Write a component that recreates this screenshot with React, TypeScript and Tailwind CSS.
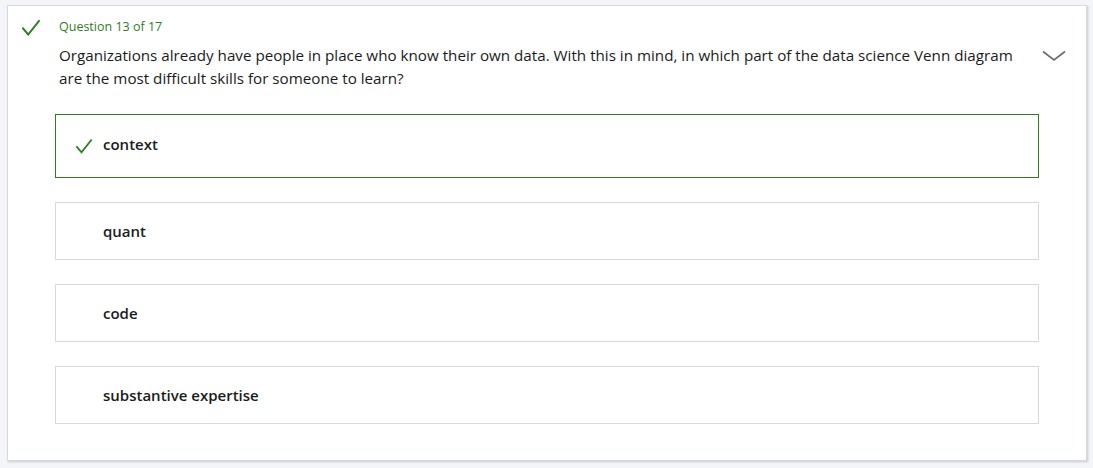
import React from "react";

function Check({ className }: { className?: string }) {
  return (
    <svg className={className} viewBox="0 0 18 16" fill="none">
      <path d="M1 8.5 L6.2 14.5 L17 1" stroke="#2e7d1e" strokeWidth="2" strokeLinecap="square" />
    </svg>
  );
}

const options = ["context", "quant", "code", "substantive expertise"];

export default function App() {
  return (
    <div className="min-h-[468px] bg-[#f3f5f8] pt-[5px] pl-[7px] pr-[6px] pb-[7px]" style={{ fontFamily: '"Open Sans", "Noto Sans", sans-serif' }}>
      <div className="bg-white border border-[#d6d9dc] shadow-[1px_1px_2px_rgba(0,0,0,0.18)] h-[456px]">
        <div className="flex pl-[14px] pr-[20px]">
          <Check className="w-[18px] h-[16px] mt-[14px] shrink-0" />
          <div className="ml-[19px] flex-1">
            <div className="text-[12.5px] leading-[16px] mt-[13px] text-[#2e7d1e]">Question 13 of 17</div>
            <div className="text-[15.2px] leading-[23px] mt-[9px] text-[#1b1b1b] w-[968px]">
              Organizations already have people in place who know their own data. With this in mind, in which part of the data science Venn diagram are the most difficult skills for someone to learn?
            </div>
          </div>
          <svg className="w-[24px] h-[12px] mt-[44px] shrink-0" viewBox="0 0 24 12" fill="none">
            <path d="M1 1.5 L12 10 L23 1.5" stroke="#6b6b6b" strokeWidth="1.6" />
          </svg>
        </div>
        <div className="mx-[47px] mt-[24px] flex flex-col gap-[24px]">
          {options.map((o, i) => (
            <div
              key={o}
              className={
                i === 0
                  ? "h-[64px] border border-[#2e7d1e] flex items-center pl-[20px] pb-[4px]"
                  : "h-[58px] border border-[#d9d9d9] flex items-center pl-[47px]"
              }
            >
              {i === 0 && <Check className="w-[16px] h-[15px] mr-[11px] mt-[4px]" />}
              <span className="text-[15px] font-semibold text-[#1b1b1b]">{o}</span>
            </div>
          ))}
        </div>
      </div>
    </div>
  );
}
